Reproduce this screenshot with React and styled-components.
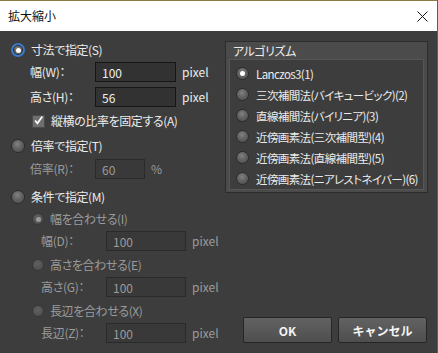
import React from 'react';
import styled, { createGlobalStyle, css } from 'styled-components';

const GlobalStyle = createGlobalStyle`
    html, body {
        margin: 0;
        padding: 0;
        background: #3d3d3d;
    }
    body {
        font-family: "Noto Sans CJK JP", "Noto Sans", sans-serif;
        font-feature-settings: "palt";
        font-size: 12px;
    }
    * {
        box-sizing: border-box;
    }
`

const algorithms = [
    'Lanczos3(1)',
    '三次補間法(バイキュービック)(2)',
    '直線補間法(バイリニア)(3)',
    '近傍画素法(三次補間型)(4)',
    '近傍画素法(直線補間型)(5)',
    '近傍画素法(ニアレストネイバー)(6)',
];

const App = () => {
    return (
        <Window>
            <GlobalStyle />
            <TitleBar>
                <Title>拡大縮小</Title>
                <CloseButton>
                    <svg width="11" height="11" viewBox="0 0 11 11">
                        <path d="M0.5 0.5 L10.5 10.5 M10.5 0.5 L0.5 10.5" stroke="#111" strokeWidth="1" fill="none" />
                    </svg>
                </CloseButton>
            </TitleBar>
            <Body>
                <LeftColumn>
                    <RadioRow $mt={0}>
                        <Radio $size={14} $checked $focus />
                        <Label>寸法で指定(S)</Label>
                    </RadioRow>
                    <FieldRow $mt={3} $indent={19}>
                        <FieldLabel>幅(W)：</FieldLabel>
                        <Input $width={81} defaultValue="100" readOnly />
                        <Unit>pixel</Unit>
                    </FieldRow>
                    <FieldRow $mt={5} $indent={19}>
                        <FieldLabel>高さ(H)：</FieldLabel>
                        <Input $width={81} defaultValue="56" readOnly />
                        <Unit>pixel</Unit>
                    </FieldRow>
                    <RadioRow $mt={5} $indent={21}>
                        <CheckBox>
                            <svg width="13" height="13" viewBox="0 0 13 13">
                                <path d="M2.5 6.5 L5.2 9.8 L11 1.8" stroke="#fff" strokeWidth="2" fill="none" />
                            </svg>
                        </CheckBox>
                        <Label>縦横の比率を固定する(A)</Label>
                    </RadioRow>
                    <RadioRow $mt={7}>
                        <Radio $size={14} />
                        <Label>倍率で指定(T)</Label>
                    </RadioRow>
                    <FieldRow $mt={4} $indent={19}>
                        <FieldLabel $disabled>倍率(R)：</FieldLabel>
                        <Input $width={50} defaultValue="60" disabled />
                        <Unit $disabled>%</Unit>
                    </FieldRow>
                    <RadioRow $mt={9}>
                        <Radio $size={14} />
                        <Label>条件で指定(M)</Label>
                    </RadioRow>
                    <RadioRow $mt={4} $indent={21}>
                        <Radio $size={12} $checked $disabled />
                        <Label $disabled>幅を合わせる(I)</Label>
                    </RadioRow>
                    <FieldRow $mt={3} $indent={30}>
                        <FieldLabel $disabled>幅(D)：</FieldLabel>
                        <Input $width={80} defaultValue="100" disabled />
                        <Unit $disabled>pixel</Unit>
                    </FieldRow>
                    <RadioRow $mt={5} $indent={21}>
                        <Radio $size={12} $disabled />
                        <Label $disabled>高さを合わせる(E)</Label>
                    </RadioRow>
                    <FieldRow $mt={3} $indent={30}>
                        <FieldLabel $disabled>高さ(G)：</FieldLabel>
                        <Input $width={80} defaultValue="100" disabled />
                        <Unit $disabled>pixel</Unit>
                    </FieldRow>
                    <RadioRow $mt={5} $indent={21}>
                        <Radio $size={12} $disabled />
                        <Label $disabled>長辺を合わせる(X)</Label>
                    </RadioRow>
                    <FieldRow $mt={3} $indent={30}>
                        <FieldLabel $disabled>長辺(Z)：</FieldLabel>
                        <Input $width={80} defaultValue="100" disabled />
                        <Unit $disabled>pixel</Unit>
                    </FieldRow>
                </LeftColumn>

                <RightColumn>
                    <GroupBox>
                        <GroupHeader>アルゴリズム</GroupHeader>
                        <GroupList>
                            {algorithms.map((name, i) => (
                                <ListItem key={name}>
                                    <Radio $size={13} $checked={i === 0} />
                                    <ListLabel>{name}</ListLabel>
                                </ListItem>
                            ))}
                        </GroupList>
                    </GroupBox>
                    <ButtonRow>
                        <Button>OK</Button>
                        <Button>キャンセル</Button>
                    </ButtonRow>
                </RightColumn>
            </Body>
        </Window>
    );
}

export default App;

const Window = styled.div`
    width: 438px;
    height: 353px;
    display: flex;
    flex-direction: column;
    background: #3d3d3d;
    border-right: 1px solid #5c5c5c;
    overflow: hidden;
`
const TitleBar = styled.div`
    height: 31px;
    flex-shrink: 0;
    display: flex;
    align-items: center;
    justify-content: space-between;
    padding: 0 9px 0 8px;
    background: #fff;
    border-top: 1px solid #8a7a45;
`
const Title = styled.div`
    color: #111;
    font-size: 12px;
    line-height: 16px;
`
const CloseButton = styled.div`
    width: 11px;
    height: 11px;
    display: flex;
`
const Body = styled.div`
    flex: 1;
    display: flex;
    padding: 10px 9px 10px 11px;
`
const LeftColumn = styled.div`
    flex: 1;
    display: flex;
    flex-direction: column;
`
const RightColumn = styled.div`
    width: 203px;
    display: flex;
    flex-direction: column;
    justify-content: space-between;
`
const RadioRow = styled.div`
    height: 18px;
    display: flex;
    align-items: center;
    gap: 6px;
    margin-top: ${p => p.$mt || 0}px;
    padding-left: ${p => p.$indent || 0}px;
`
const Radio = styled.span`
    position: relative;
    flex-shrink: 0;
    width: ${p => p.$size}px;
    height: ${p => p.$size}px;
    border-radius: 50%;
    border: 1px solid #2c2c2c;
    background: radial-gradient(circle at 45% 35%, #828282 0%, #626262 45%, #4c4c4c 100%);
    ${p => p.$disabled && css`
        border-color: #383838;
        background: radial-gradient(circle at 45% 35%, #606060 0%, #555 50%, #4a4a4a 100%);
    `}
    ${p => p.$focus && css`
        border: 2px solid #3a78c8;
        box-shadow: inset 0 0 0 1px #2a2a2a;
    `}
    ${p => p.$checked && css`
        &::after {
            content: '';
            position: absolute;
            left: 50%;
            top: 50%;
            width: 5px;
            height: 5px;
            margin: -2.5px 0 0 -2.5px;
            border-radius: 50%;
            background: ${p.$disabled ? '#9a9a9a' : '#fff'};
        }
    `}
`
const Label = styled.span`
    color: ${p => p.$disabled ? '#9b9b9b' : '#ececec'};
    font-size: 12px;
    line-height: 16px;
    letter-spacing: -0.4px;
    white-space: nowrap;
`
const ListLabel = styled.span`
    color: #ececec;
    font-size: 11.5px;
    line-height: 16px;
    letter-spacing: -0.6px;
    white-space: nowrap;
`
const CheckBox = styled.span`
    width: 13px;
    height: 13px;
    flex-shrink: 0;
    display: flex;
    background: #6f6f6f;
    border: 1px solid #4a4a4a;
    svg {
        margin: -2px 0 0 0;
    }
`
const FieldRow = styled.div`
    height: 20px;
    display: flex;
    align-items: center;
    margin-top: ${p => p.$mt || 0}px;
    padding-left: ${p => p.$indent || 0}px;
`
const FieldLabel = styled.span`
    width: 65px;
    flex-shrink: 0;
    color: ${p => p.$disabled ? '#9b9b9b' : '#ececec'};
    font-size: 12px;
    line-height: 16px;
    letter-spacing: -0.3px;
    white-space: nowrap;
`
const Input = styled.input`
    width: ${p => p.$width}px;
    height: 20px;
    padding: 0 6px;
    margin: 0;
    border: 1px solid #161616;
    background: #323232;
    color: #f0f0f0;
    font-family: "Noto Sans CJK JP", "Noto Sans", sans-serif;
    font-size: 12px;
    outline: none;
    &:disabled {
        border-color: #2a2a2a;
        background: #393939;
        color: #9b9b9b;
    }
`
const Unit = styled.span`
    margin-left: 6px;
    color: ${p => p.$disabled ? '#9b9b9b' : '#ececec'};
    font-size: 12px;
    line-height: 16px;
`
const GroupBox = styled.div`
    height: 152px;
    display: flex;
    flex-direction: column;
    border: 1px solid #2c2c2c;
    background: #4b4b4b;
    padding: 0 3px 3px 3px;
`
const GroupHeader = styled.div`
    height: 19px;
    display: flex;
    align-items: center;
    padding-left: 4px;
    color: #ececec;
    font-size: 12px;
    letter-spacing: -0.4px;
`
const GroupList = styled.div`
    flex: 1;
    display: flex;
    flex-direction: column;
    padding: 3px 0 0 6px;
    background: #3d3d3d;
    border: 1px solid #565656;
`
const ListItem = styled.div`
    height: 21px;
    display: flex;
    align-items: center;
    gap: 7px;
`
const ButtonRow = styled.div`
    display: flex;
    justify-content: flex-end;
    gap: 6px;
    padding-right: 1px;
`
const Button = styled.button`
    width: 89px;
    height: 26px;
    border: 1px solid #262626;
    border-radius: 2px;
    background: linear-gradient(#626262, #4e4e4e);
    color: #f4f4f4;
    font-family: "Noto Sans CJK JP", "Noto Sans", sans-serif;
    font-size: 12px;
    font-weight: 700;
    padding: 0;
`
